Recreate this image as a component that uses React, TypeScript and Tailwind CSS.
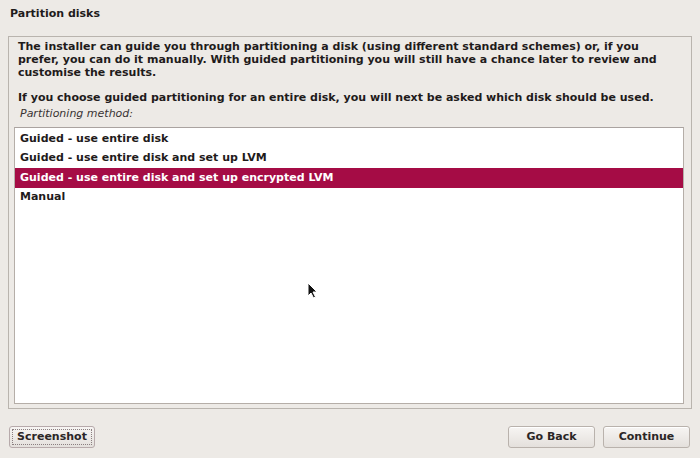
const font = { fontFamily: '"DejaVu Sans", "Liberation Sans", sans-serif' };

const options = [
  "Guided - use entire disk",
  "Guided - use entire disk and set up LVM",
  "Guided - use entire disk and set up encrypted LVM",
  "Manual",
];

function Button({ label, width }: { label: string; width: string }) {
  return (
    <button
      className={`${width} h-[22px] rounded-[3px] border border-[#b9b2ac] bg-gradient-to-b from-[#f7f5f3] to-[#e4e0dc] text-[11px] font-bold text-[#2b2626] shadow-[inset_0_1px_0_#ffffff]`}
    >
      {label}
    </button>
  );
}

export default function App() {
  return (
    <div
      className="relative flex h-[458px] w-[700px] flex-col bg-[#edeae6] text-[#1f1b1b]"
      style={font}
    >
      <h1 className="px-[10px] pt-[7px] text-[11px] font-bold leading-[14px]">
        Partition disks
      </h1>

      <div className="mx-[8px] mt-[15px] flex h-[373px] flex-col border border-[#b9b4ae] pb-[4px] pl-[5px] pr-[7px] pt-[3px]">
        <p className="pl-[4px] text-[11px] font-bold leading-[13px]">
          The installer can guide you through partitioning a disk (using different standard schemes) or, if you
          <br />
          prefer, you can do it manually. With guided partitioning you will still have a chance later to review and
          <br />
          customise the results.
        </p>
        <p className="mt-[12px] pl-[4px] text-[11px] font-bold leading-[13px]">
          If you choose guided partitioning for an entire disk, you will next be asked which disk should be used.
        </p>
        <p className="mt-[3px] pl-[6px] text-[11px] italic leading-[13px] text-[#3a3434]">
          Partitioning method:
        </p>

        <ul className="mt-[7px] flex-1 border border-[#b5aea8] border-t-[#aaa3a0] bg-white pt-[1px]">
          {options.map((o, i) => (
            <li
              key={o}
              className={`flex h-[19.5px] items-center pl-[5px] text-[11px] font-bold ${
                i === 2 ? "bg-[#a50c45] text-white" : "text-[#1f1b1b]"
              }`}
            >
              {o}
            </li>
          ))}
        </ul>
      </div>

      <div className="mt-[17px] flex items-center px-[9px]">
        <button className="h-[22px] w-[86px] rounded-[3px] border border-[#b7aaab] bg-gradient-to-b from-[#f7f5f3] to-[#e4e0dc] text-[11px] font-bold text-[#2b2626] outline-1 outline-dotted outline-offset-[-4px] outline-[#8a7f80]">
          Screenshot
        </button>
        <div className="ml-auto flex gap-[8px] pr-[1px]">
          <Button label="Go Back" width="w-[87px]" />
          <Button label="Continue" width="w-[87px]" />
        </div>
      </div>

      <svg
        className="absolute left-[307px] top-[282px]"
        width="12"
        height="18"
        viewBox="0 0 12 18"
      >
        <path
          d="M1 1 L1 14 L4 11 L6.5 16 L8.5 15 L6 10 L10 10 Z"
          fill="#111"
          stroke="#fff"
          strokeWidth="1"
        />
      </svg>
    </div>
  );
}
